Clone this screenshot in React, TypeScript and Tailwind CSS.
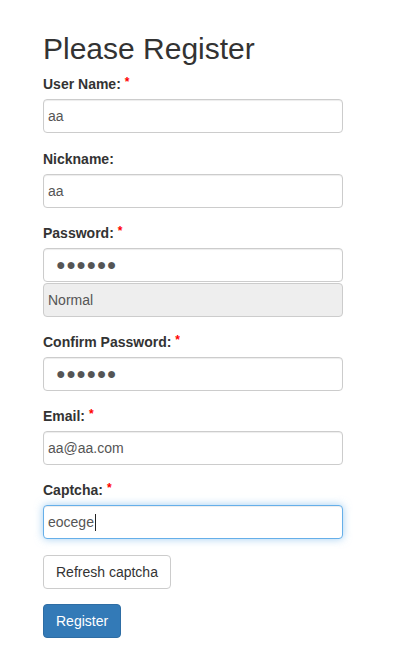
import React, { useState } from 'react';

const inputCls =
  'block w-[300px] h-[34px] px-[4px] text-[14px] leading-[20px] text-[#555] bg-white border border-[#ccc] rounded-[4px] shadow-[inset_0_1px_1px_rgba(0,0,0,0.075)] outline-none';

const Label: React.FC<{ text: string; required?: boolean }> = ({ text, required }) => (
  <label className="flex h-[20px] mb-[5px] text-[14px] leading-[20px] font-bold text-[#333]">
    {text}
    {required && <span className="ml-[4px] text-[12px] leading-[16px] text-[#f00] font-bold">*</span>}
  </label>
);

const App: React.FC = () => {
  const [userName, setUserName] = useState('aa');
  const [nickname, setNickname] = useState('aa');
  const [email, setEmail] = useState('aa@aa.com');

  return (
    <div className="min-h-[647px] bg-white pl-[43px] pt-[32px] font-['Liberation_Sans',Arial,sans-serif] text-[#333]">
      <h2 className="text-[30px] leading-[33px] font-medium mb-[9px]">Please Register</h2>
      <form onSubmit={(e) => e.preventDefault()} className="w-[300px]">
        <div className="mb-[16px]">
          <Label text="User Name:" required />
          <input type="text" value={userName} onChange={(e) => setUserName(e.target.value)} className={inputCls} />
        </div>
        <div className="mb-[15px]">
          <Label text="Nickname:" />
          <input type="text" value={nickname} onChange={(e) => setNickname(e.target.value)} className={inputCls} />
        </div>
        <div className="mb-[15px]">
          <Label text="Password:" required />
          <div className={inputCls + ' flex items-center pl-[12px] text-[#555] text-[16px] tracking-[0.5px]'}>●●●●●●</div>
          <div className="mt-px w-[300px] h-[34px] px-[4px] flex items-center text-[14px] text-[#555] bg-[#eee] border border-[#ccc] rounded-[4px]">
            Normal
          </div>
        </div>
        <div className="mb-[15px]">
          <Label text="Confirm Password:" required />
          <div className={inputCls + ' flex items-center pl-[12px] text-[#555] text-[16px] tracking-[0.5px]'}>●●●●●●</div>
        </div>
        <div className="mb-[15px]">
          <Label text="Email:" required />
          <input type="text" value={email} onChange={(e) => setEmail(e.target.value)} className={inputCls} />
        </div>
        <div className="mb-[16px]">
          <Label text="Captcha:" required />
          <div className="flex items-center w-[300px] h-[34px] px-[4px] text-[14px] text-[#555] bg-white border border-[#66afe9] rounded-[4px] shadow-[inset_0_1px_1px_rgba(0,0,0,0.075),0_0_8px_rgba(102,175,233,0.6)]">
            eocege
            <span className="inline-block w-px h-[17px] bg-[#222] ml-px" />
          </div>
        </div>
        <button type="button" className="block h-[34px] px-[12px] text-[14px] text-[#333] bg-white border border-[#ccc] rounded-[4px] mb-[15px]">
          Refresh captcha
        </button>
        <button type="submit" className="block h-[34px] px-[12px] text-[14px] text-white bg-[#337ab7] border border-[#2e6da4] rounded-[4px]">
          Register
        </button>
      </form>
    </div>
  );
};

export default App;
